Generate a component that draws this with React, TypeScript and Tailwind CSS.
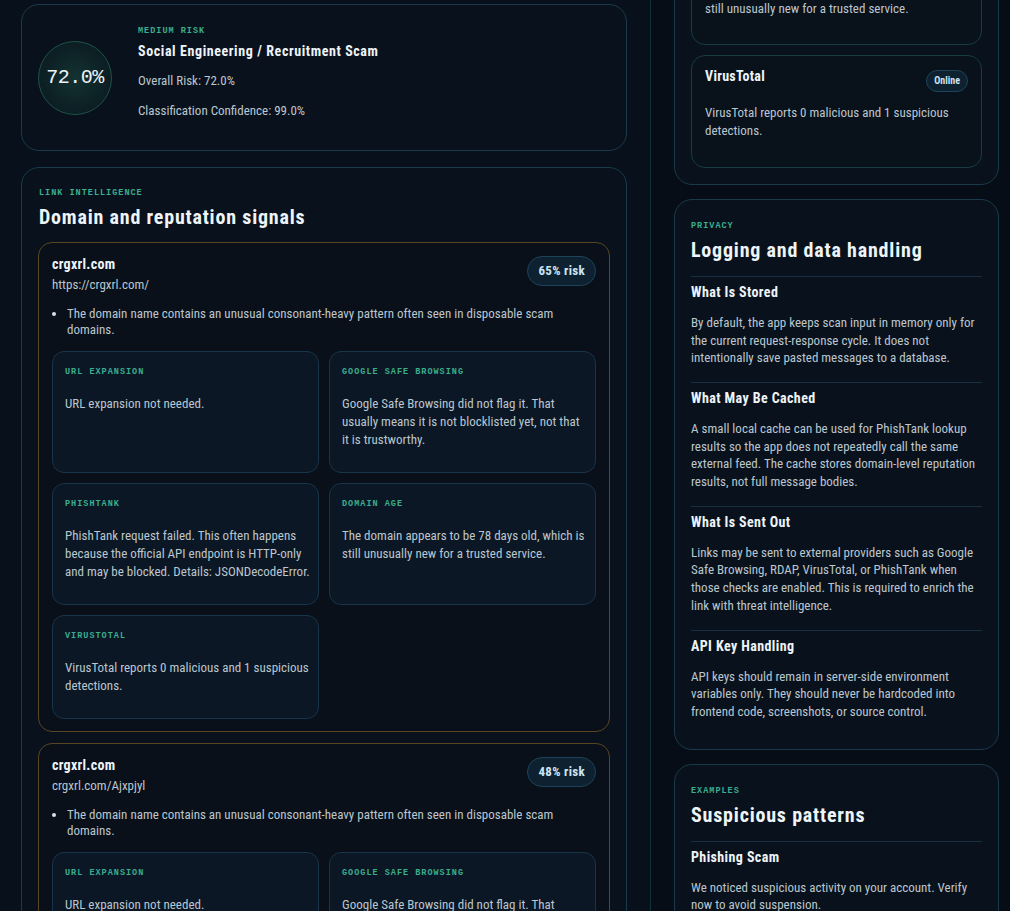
const body = "font-['Roboto_Condensed','Roboto',sans-serif]";
const mono = "font-['Liberation_Mono','DejaVu_Sans_Mono',monospace]";

function Label({ children, className = "" }: { children: string; className?: string }) {
  return (
    <div className={`${mono} text-[8.5px] font-bold leading-[10px] tracking-[1px] uppercase text-[#3aae8e] ${className}`}>
      {children}
    </div>
  );
}

function Pill({ children, small = false }: { children: string; small?: boolean }) {
  return (
    <span
      className={`shrink-0 rounded-full border border-[#1d4359] bg-[#0e2130] font-bold text-[#cde4f2] ${
        small
          ? "block h-[22px] px-[7px] text-[10px] leading-[20px]"
          : "block h-[30px] px-[10px] text-[13px] leading-[28px] tracking-[0.3px]"
      }`}
    >
      {children}
    </span>
  );
}

function SignalCard({ label, text }: { label: string; text: string }) {
  return (
    <div className="rounded-[12px] border border-[#18344a] bg-[#0b1724] pl-[12px] pr-[8px] pt-[15px] pb-[23px]">
      <Label>{label}</Label>
      <p className="mt-[18px] text-[13px] leading-[18px] text-[#bcc6cf]">{text}</p>
    </div>
  );
}

interface LinkCardProps {
  domain: string;
  url: string;
  risk: string;
  signals: { label: string; text: string }[];
}

function LinkCard({ domain, url, risk, signals }: LinkCardProps) {
  return (
    <div className="rounded-[14px] border border-[#5a4522] bg-[#09101a] px-[13px] pt-[13px] pb-[12px]">
      <div className="flex items-start justify-between">
        <div>
          <div className="text-[14px] font-bold leading-[16px] tracking-[0.3px] text-[#eef4f8]">{domain}</div>
          <div className="mt-[5px] text-[13px] leading-[16px] text-[#bcc6cf]">{url}</div>
        </div>
        <Pill>{risk}</Pill>
      </div>
      <ul className="mt-[13px] list-disc pl-[15px] text-[13px] leading-[16px] text-[#bcc6cf] marker:text-[#d8e0e6]">
        <li>The domain name contains an unusual consonant-heavy pattern often seen in disposable scam domains.</li>
      </ul>
      <div className="mt-[13px] grid grid-cols-2 gap-x-[10px] gap-y-[10px]">
        {signals.map((s, i) => (
          <SignalCard key={i} label={s.label} text={s.text} />
        ))}
      </div>
    </div>
  );
}

const signals = [
  { label: "URL Expansion", text: "URL expansion not needed." },
  {
    label: "Google Safe Browsing",
    text: "Google Safe Browsing did not flag it. That usually means it is not blocklisted yet, not that it is trustworthy.",
  },
  {
    label: "PhishTank",
    text: "PhishTank request failed. This often happens because the official API endpoint is HTTP-only and may be blocked. Details: JSONDecodeError.",
  },
  {
    label: "Domain Age",
    text: "The domain appears to be 78 days old, which is still unusually new for a trusted service.",
  },
  { label: "VirusTotal", text: "VirusTotal reports 0 malicious and 1 suspicious detections." },
];

function ProviderCard({ name, text }: { name: string; text: string }) {
  return (
    <div className="rounded-[14px] border border-[#173c42] bg-[#09111b] px-[13px] pt-[13px] pb-[27px]">
      <div className="flex items-start justify-between">
        <div className="-mt-[1px] text-[14px] font-bold leading-[16px] tracking-[0.3px] text-[#eef4f8]">{name}</div>
        <div className="pt-[1px]">
          <Pill small>Online</Pill>
        </div>
      </div>
      <p className="mt-[12px] text-[13px] leading-[17.7px] text-[#bcc6cf]">{text}</p>
    </div>
  );
}

function Section({ title, text, last = false }: { title: string; text: string; last?: boolean }) {
  return (
    <div className={`border-t border-[#16303f] pt-[7px] ${last ? "pb-[28px]" : "pb-[15px]"}`}>
      <div className="text-[14px] font-bold leading-[16px] tracking-[0.4px] text-[#eef4f8]">{title}</div>
      <p className="mt-[14px] text-[13px] leading-[17.7px] text-[#bcc6cf]">{text}</p>
    </div>
  );
}

function Panel({ children, className = "" }: { children: React.ReactNode; className?: string }) {
  return (
    <div className={`rounded-[18px] border border-[#1a3a4c] bg-[#09121c] ${className}`}>{children}</div>
  );
}

function Heading({ children }: { children: string }) {
  return (
    <h2 className="mt-[7px] text-[20px] font-bold leading-[24px] tracking-[0.8px] text-[#eef4f8]">{children}</h2>
  );
}

export default function App() {
  return (
    <div className={`${body} h-[911px] overflow-hidden bg-[#070d16]`}>
      <div className="flex items-start">
        <div className="flex min-h-[911px] w-[651px] shrink-0 flex-col gap-[16px] border-r border-[#13303f] bg-[#08111b] pt-[4px] pl-[21px] pr-[23px]">
          <Panel className="flex h-[147px] items-center gap-[26px] px-[16px]">
            <div className="flex h-[74px] w-[74px] shrink-0 items-center justify-center rounded-full border border-[#1d5248] bg-[radial-gradient(circle,#143232_0%,#0d2226_55%,#0a161d_100%)]">
              <span className={`${mono} text-[20px] leading-none tracking-[-0.5px] text-[#eef4f8]`}>72.0%</span>
            </div>
            <div className="-mt-[9px]">
              <Label>Medium Risk</Label>
              <div className="mt-[6px] text-[14px] font-bold leading-[18px] tracking-[0.6px] text-[#eef4f8]">
                Social Engineering / Recruitment Scam
              </div>
              <div className="mt-[12px] text-[13px] leading-[18px] text-[#bcc6cf]">Overall Risk: 72.0%</div>
              <div className="mt-[12px] text-[13px] leading-[18px] text-[#bcc6cf]">Classification Confidence: 99.0%</div>
            </div>
          </Panel>

          <Panel className="px-[16px] pt-[20px] pb-[16px]">
            <Label className="pl-[1px]">Link Intelligence</Label>
            <div className="pl-[1px]">
              <Heading>Domain and reputation signals</Heading>
            </div>
            <div className="mt-[13px] flex flex-col gap-[11px]">
              <LinkCard domain="crgxrl.com" url="https://crgxrl.com/" risk="65% risk" signals={signals} />
              <LinkCard domain="crgxrl.com" url="crgxrl.com/Ajxpjyl" risk="48% risk" signals={signals} />
            </div>
          </Panel>
        </div>

        <div className="-mt-[84px] flex w-[348px] shrink-0 flex-col gap-[14px] pl-[23px]">
          <Panel className="flex flex-col gap-[10px] px-[16px] pt-[16px] pb-[16px]">
            <ProviderCard
              name="Domain Age"
              text="The domain appears to be 78 days old, which is still unusually new for a trusted service."
            />
            <ProviderCard name="VirusTotal" text="VirusTotal reports 0 malicious and 1 suspicious detections." />
          </Panel>

          <Panel className="px-[16px] pt-[21px]">
            <Label>Privacy</Label>
            <div className="mb-[14px]">
              <Heading>Logging and data handling</Heading>
            </div>
            <Section
              title="What Is Stored"
              text="By default, the app keeps scan input in memory only for the current request-response cycle. It does not intentionally save pasted messages to a database."
            />
            <Section
              title="What May Be Cached"
              text="A small local cache can be used for PhishTank lookup results so the app does not repeatedly call the same external feed. The cache stores domain-level reputation results, not full message bodies."
            />
            <Section
              title="What Is Sent Out"
              text="Links may be sent to external providers such as Google Safe Browsing, RDAP, VirusTotal, or PhishTank when those checks are enabled. This is required to enrich the link with threat intelligence."
            />
            <Section
              last
              title="API Key Handling"
              text="API keys should remain in server-side environment variables only. They should never be hardcoded into frontend code, screenshots, or source control."
            />
          </Panel>

          <Panel className="px-[16px] pt-[21px] pb-[16px]">
            <Label>Examples</Label>
            <div className="mb-[14px]">
              <Heading>Suspicious patterns</Heading>
            </div>
            <Section
              title="Phishing Scam"
              text="We noticed suspicious activity on your account. Verify now to avoid suspension."
            />
          </Panel>
        </div>
      </div>
    </div>
  );
}
